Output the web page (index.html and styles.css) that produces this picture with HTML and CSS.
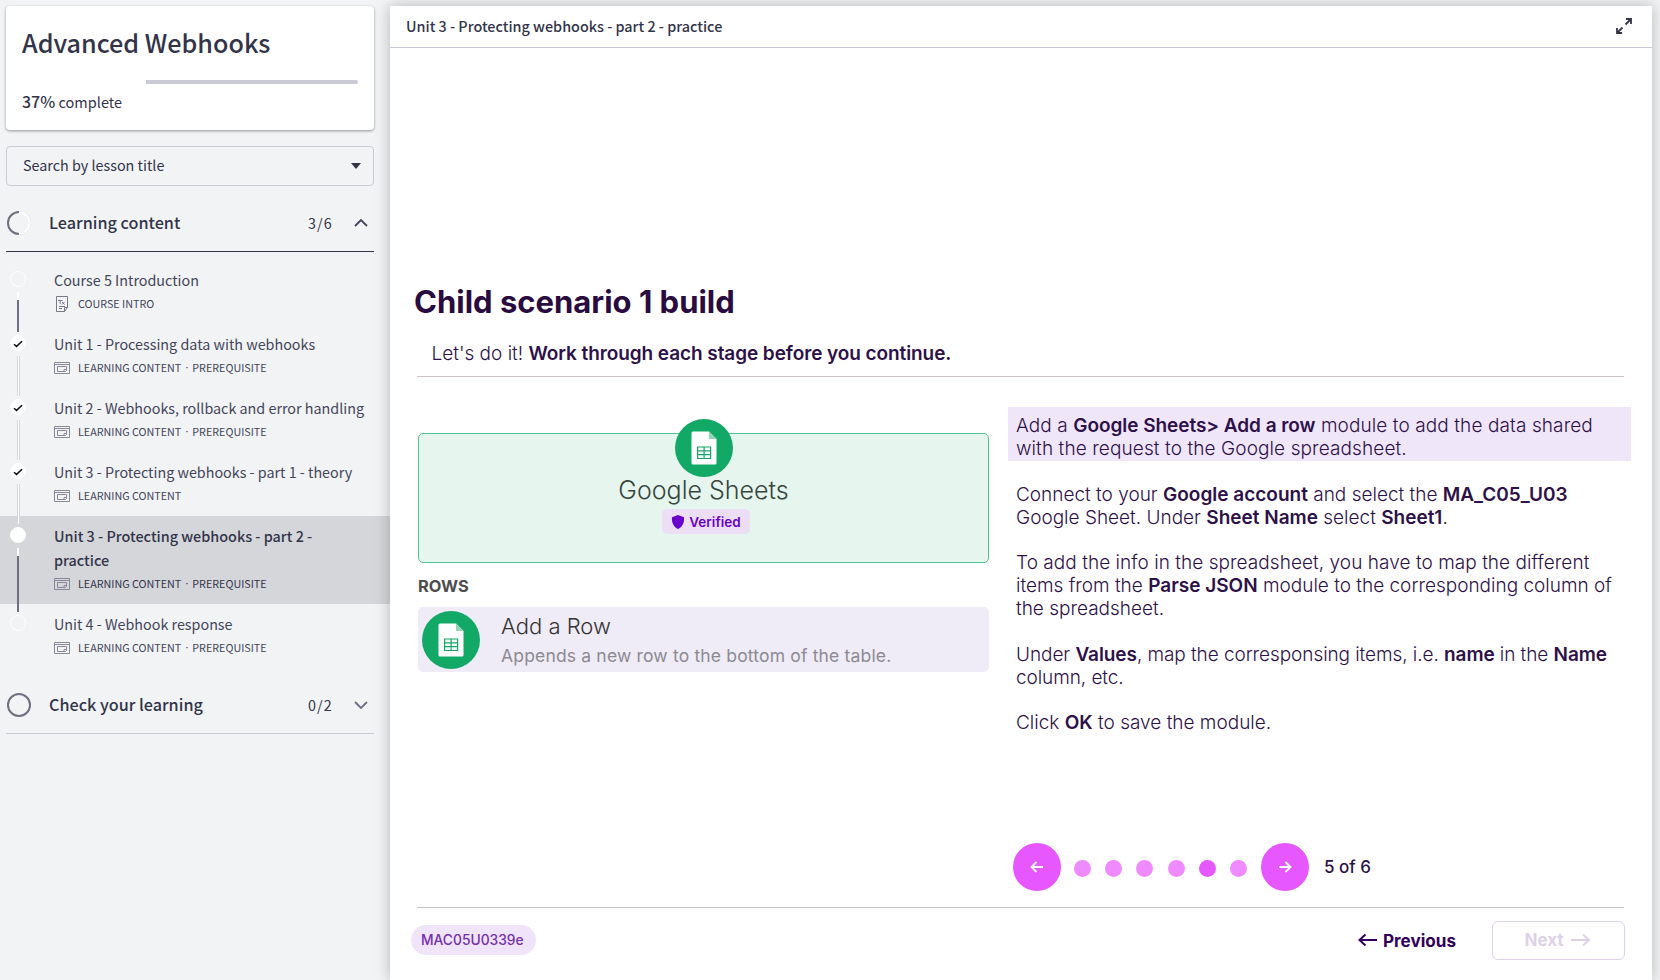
FILE: index.html
```html
<!DOCTYPE html>
<html lang="en">
<head>
<meta charset="utf-8">
<title>Advanced Webhooks</title>
<link rel="stylesheet" href="styles.css">
</head>
<body>
<svg class="defs" width="0" height="0">
  <symbol id="lesson" viewBox="0 0 16 14"><path d="M.5 1.500h15v11H.5zM.5 3.500h15M3.500 5.500h9V9.500l-1 1h-8zM12 8.500h-2v1.500" fill="none" stroke="#87889a"/></symbol>
  <symbol id="check" viewBox="0 0 10 8"><path d="M1 4.200 3.500 6.400 9 1.300" fill="none" stroke="#111" stroke-width="1.500"/></symbol>
  <symbol id="sheet" viewBox="0 0 58 58"><circle cx="29" cy="29" r="29" fill="#12a866"/><path d="M18 12.500h16l7.500 7.500v24a1.500 1.500 0 0 1-1.500 1.500H18a1.500 1.500 0 0 1-1.500-1.500V14a1.500 1.500 0 0 1 1.500-1.500z" fill="#fff"/><path d="M34 12.500l7.500 7.500H34z" fill="#8fd6b5"/><path d="M22.600 28h13v11.500h-13zM22.600 31.800h13M22.600 35.600h13M29.100 28v11.500" fill="none" stroke="#12a866" stroke-width="1.200"/></symbol>
</svg>
<div class="app">
  <aside class="sidebar">
    <section class="course">
      <h1>Advanced Webhooks</h1>
      <div class="progress"><i></i></div>
      <p><b>37%</b> complete</p>
    </section>
    <div class="search"><span>Search by lesson title</span><svg width="10" height="6"><path d="M0 0h10L5 6z" fill="#33344a"/></svg></div>
    <div class="section open">
      <svg width="24" height="24" viewBox="0 0 24 24"><circle cx="12" cy="12" r="11" fill="none" stroke="#d4d5da" stroke-width="2"/><circle cx="12" cy="12" r="10.700" fill="none" stroke="#fff" stroke-width="2"/><path d="M12 1a11 11 0 0 0 0 22" fill="none" stroke="#6e6f83" stroke-width="2"/></svg>
      <h2>Learning content</h2><em>3/6</em>
      <svg width="14" height="8"><path d="M1 7l6-6 6 6" fill="none" stroke="#44455a" stroke-width="1.800"/></svg>
    </div>
    <ul class="lessons">
      <li><div class="track"><span class="dot"></span><span class="rail todo"></span></div><div class="info"><h3>Course 5 Introduction</h3><p><svg width="16" height="16"><path d="M2.500 .5h11v11l-3 4h-8zM10.500 15.500v-4h3M5 10.500h6M5 12.500h3" fill="none" stroke="#77788b"/><path d="M4 4.500h4.500M6.200 4.500V8M8 6l2.500 2.500M10.500 6 8 8.500" fill="none" stroke="#77788b"/></svg><span>COURSE INTRO</span></p></div></li>
      <li><div class="track"><span class="dot full"><svg width="10" height="8"><use href="#check"/></svg></span><span class="rail"></span></div><div class="info"><h3>Unit 1 - Processing data with webhooks</h3><p><svg width="16" height="14"><use href="#lesson"/></svg><span>LEARNING CONTENT</span><i>·</i><span>PREREQUISITE</span></p></div></li>
      <li><div class="track"><span class="dot full"><svg width="10" height="8"><use href="#check"/></svg></span><span class="rail"></span></div><div class="info"><h3>Unit 2 - Webhooks, rollback and error handling</h3><p><svg width="16" height="14"><use href="#lesson"/></svg><span>LEARNING CONTENT</span><i>·</i><span>PREREQUISITE</span></p></div></li>
      <li><div class="track"><span class="dot full"><svg width="10" height="8"><use href="#check"/></svg></span><span class="rail"></span></div><div class="info"><h3>Unit 3 - Protecting webhooks - part 1 - theory</h3><p><svg width="16" height="14"><use href="#lesson"/></svg><span>LEARNING CONTENT</span></p></div></li>
      <li class="active"><div class="track"><span class="dot full"></span><span class="rail todo"></span></div><div class="info"><h3>Unit 3 - Protecting webhooks - part 2 -<br>practice</h3><p><svg width="16" height="14"><use href="#lesson"/></svg><span>LEARNING CONTENT</span><i>·</i><span>PREREQUISITE</span></p></div></li>
      <li><div class="track"><span class="dot"></span></div><div class="info"><h3>Unit 4 - Webhook response</h3><p><svg width="16" height="14"><use href="#lesson"/></svg><span>LEARNING CONTENT</span><i>·</i><span>PREREQUISITE</span></p></div></li>
    </ul>
    <div class="section">
      <svg width="24" height="24" viewBox="0 0 24 24"><circle cx="12" cy="12" r="11" fill="none" stroke="#6e6f83" stroke-width="2"/></svg>
      <h2>Check your learning</h2><em>0/2</em>
      <svg width="14" height="8"><path d="M1 1l6 6 6-6" fill="none" stroke="#6e6f83" stroke-width="1.800"/></svg>
    </div>
  </aside>
  <main class="player">
    <header><h2>Unit 3 - Protecting webhooks - part 2 - practice</h2>
      <svg width="16" height="16"><path d="M9.500 6.500 14.500 1.500M10 1h5v5M6.500 9.500l-5 5M1 10v5h5" fill="none" stroke="#33344a" stroke-width="1.800"/></svg></header>
    <div class="slide">
      <h1>Child scenario 1 build</h1>
      <p class="lead">Let's do it! <b>Work through each stage before you continue.</b></p>
      <div class="columns">
        <div class="left">
          <div class="app-card">
            <svg width="58" height="58"><use href="#sheet"/></svg>
            <h2>Google Sheets</h2>
            <div class="verified"><svg width="14" height="14" viewBox="0 0 14 14"><path d="M7 0 13 2.200C13.600 8 11 12 7 14 3 12 .4 8 1 2.200z" fill="#6a00cc"/></svg><span>Verified</span></div>
          </div>
          <h4>ROWS</h4>
          <div class="row-card"><svg width="58" height="58"><use href="#sheet"/></svg><div><h3>Add a Row</h3><p>Appends a new row to the bottom of the table.</p></div></div>
        </div>
        <div class="steps">
          <p class="hl">Add a <b>Google Sheets&gt; Add a row</b> module to add the data shared<br>with the request to the Google spreadsheet.</p>
          <p>Connect to your <b>Google account</b> and select the <b>MA_C05_U03</b><br>Google Sheet. Under <b>Sheet Name</b> select <b>Sheet1</b>.</p>
          <p class="map"><span>To add the info in the spreadsheet, you have to map the different</span><br>items from the <b>Parse JSON</b> module to the corresponding column of<br>the spreadsheet.</p>
          <p class="values">Under <b>Values</b>, map the corresponsing items, i.e. <b>name</b> in the <b>Name</b><br>column, etc.</p>
          <p>Click <b>OK</b> to save the module.</p>
          <nav class="pager">
            <button><svg width="14" height="12"><path d="M13 6H1.500M6.500 1l-5 5 5 5" fill="none" stroke="#fff" stroke-width="1.800"/></svg></button>
            <div class="dots"><i></i><i></i><i></i><i></i><i class="on"></i><i></i></div>
            <button><svg width="14" height="12"><path d="M1 6h11.500M7.500 1l5 5-5 5" fill="none" stroke="#fff" stroke-width="1.800"/></svg></button>
            <span class="count">5 of 6</span>
          </nav>
        </div>
      </div>
      <footer>
        <span class="code">MAC05U0339e</span>
        <a class="prev"><svg width="20" height="14"><path d="M19 7H1.500M7.500 1.500 1.500 7l6 5.500" fill="none" stroke="#32005c" stroke-width="2"/></svg><span>Previous</span></a>
        <a class="next"><span>Next</span><svg width="20" height="14"><path d="M0 7h18M12 1.500 18 7l-6 5.500" fill="none" stroke="#ddd2e8" stroke-width="2"/></svg></a>
      </footer>
    </div>
  </main>
</div>
</body>
</html>
```
FILE: styles.css
```css
* { box-sizing: border-box; margin: 0; padding: 0; }
body { width: 1660px; height: 980px; overflow: hidden; background: #f1f3f5; color: #33344a; font-family: "Noto Sans CJK SC", "Open Sans", sans-serif; }
.defs { position: absolute; }
svg { display: block; flex: none; }
i, em { font-style: normal; }
.app { display: flex; height: 980px; }
.sidebar { width: 390px; padding-top: 6px; flex: none; }
.course { width: 368px; height: 124px; margin-left: 6px; padding: 15px 16px; background: #fff; border-radius: 4px; box-shadow: 0 1px 3px rgba(0,0,0,.4); }
.course h1 { font-size: 25.150px; line-height: 42px; font-weight: 500; white-space: nowrap; }
.progress { height: 4px; margin-top: 17px; background: #c9cbd6; border-radius: 2px; }
.progress i { display: block; width: 37%; height: 4px; background: #fff; }
.course p { margin-top: 5px; font-size: 14.500px; line-height: 24px; }
.course b { font-size: 16px; font-weight: 500; }
.search { display: flex; justify-content: space-between; align-items: center; width: 368px; height: 40px; margin: 16px 0 0 6px; padding: 0 12px 0 16px; border: 1px solid #c9cbd6; border-radius: 4px; font-size: 14.350px; }
.search span { padding-bottom: 3px; }
.section { display: flex; align-items: center; width: 368px; height: 58px; margin-left: 6px; padding: 0 6px 0 1px; border-bottom: 1px solid #c9cbd6; }
.section.open { height: 66px; padding-top: 8px; border-color: #33344a; }
.section h2 { flex: 1; margin-left: 18px; padding-bottom: 2px; font-size: 16.200px; font-weight: 500; }
.section em { margin-right: 21px; font-size: 14.300px; letter-spacing: 1.200px; }
.lessons { list-style: none; padding-top: 8px; margin-bottom: 8px; }
.lessons li { display: flex; min-height: 64px; padding: 8px 0 9px; color: #44455a; }
.lessons .active { min-height: 88px; background: #d5d6da; color: #33344a; }
.track { position: relative; width: 54px; padding: 3px 0 0 10px; }
.dot { display: flex; align-items: center; justify-content: center; width: 16px; height: 16px; border: 1px solid #fff; border-radius: 50%; }
.dot.full { background: #fff; }
.dot svg { margin-top: 1px; }
.rail { position: absolute; z-index: 1; left: 17px; top: 24px; bottom: -17px; width: 3px; background: #fff; border: solid #d5d6da; border-width: 0 1px; }
.rail.todo { width: 2px; border: 0; background: linear-gradient(#fff 8px, #6e6f83 8px); }
.info h3 { font-size: 14.330px; line-height: 24px; font-weight: 400; white-space: nowrap; }
.active .info h3 { font-size: 14.400px; font-weight: 500; }
.info p { display: flex; align-items: center; height: 22px; font-size: 10.750px; }
.info p svg { margin: 2px 8px 0 0; }
.info p i { width: 11px; text-align: center; font-family: "Open Sans", sans-serif; }
.player { width: 1262px; margin-top: 6px; background: #fff; box-shadow: 0 0 14px rgba(0,0,0,.25); }
header { display: flex; align-items: center; justify-content: space-between; height: 42px; padding: 0 20px 0 16px; border-bottom: 1px solid #c9c8d8; }
header h2 { padding-bottom: 2px; font-size: 14.380px; font-weight: 500; }
header svg { margin-top: -2px; }
.slide { padding: 234px 28px 0 27px; font-family: Inter, sans-serif; color: #2d1148; }
.slide h1 { margin-left: -3px; font-size: 31px; line-height: 40px; font-weight: 700; color: #290b40; }
.lead { height: 55px; padding: 22px 0 0 14.500px; border-bottom: 1px solid #cbc1c7; font-size: 19px; line-height: 20px; font-weight: 300; white-space: nowrap; }
b { font-weight: 600; }
.lead b { letter-spacing: -.08px; }
.columns { display: flex; height: 530px; }
.left { width: 572px; padding: 56px 0 0 1px; flex: none; }
.app-card { display: flex; flex-direction: column; align-items: center; height: 130px; border: 1px solid #4fc391; border-radius: 5px; background: #e6f5ed; }
.app-card > svg { margin-top: -15px; }
.app-card h2 { margin-top: -2px; font-size: 25px; line-height: 30px; font-weight: 350; color: #36463f; }
.verified { display: flex; align-items: center; gap: 4px; height: 25px; margin: 4px 0 0 5px; padding: 0 9px; border-radius: 5px; background: #ecdff5; color: #6a00cc; font-size: 13.500px; font-weight: 600; }
.left h4 { margin: 13px 0 11px; font-size: 16.400px; line-height: 20px; color: #4d4d4d; }
.row-card { display: flex; align-items: center; height: 65px; padding-left: 4px; border-radius: 5px; background: #efebf7; }
.row-card div { margin: 2px 0 0 21px; }
.row-card h3 { font-size: 22px; line-height: 30px; font-weight: 350; color: #333; }
.row-card p { font-size: 17.500px; line-height: 30px; font-weight: 400; letter-spacing: .17px; color: #8c8a91; white-space: nowrap; }
.steps { width: 623px; margin: 30px 0 0 19px; flex: none; font-size: 19px; line-height: 22.880px; font-weight: 300; white-space: nowrap; }
.steps p { padding-left: 8px; margin-bottom: 22.880px; }
.steps .hl { height: 54px; padding-top: 8px; margin-bottom: 22.700px; background: #f0e6fa; letter-spacing: .1px; }
.hl b { letter-spacing: -.05px; }
.map span { letter-spacing: .05px; }
.values { letter-spacing: -.07px; }
.pager { display: flex; align-items: center; margin: 108px 0 0 5px; }
button { display: flex; align-items: center; justify-content: center; width: 48px; height: 48px; border: 0; border-radius: 50%; background: #e657ff; }
.dots { display: flex; gap: 14.200px; margin: 2px 14px 0 13px; }
.dots i { width: 17px; height: 17px; border-radius: 50%; background: #ef8aff; }
.dots .on { background: #e657ff; }
.count { margin-left: 15px; font-size: 17px; font-weight: 500; }
footer { display: flex; align-items: center; height: 65px; border-top: 1px solid #cbc1c7; }
.code { height: 30px; margin-left: -6px; padding: 0 12px 0 10px; border-radius: 15px; background: #f0e4fb; color: #752fa8; font-size: 13.800px; line-height: 30px; font-weight: 500; }
.prev { display: flex; align-items: center; gap: 5px; margin: 0 36px 0 auto; color: #32005c; font-size: 17.100px; font-weight: 700; }
.next { display: flex; align-items: center; justify-content: center; gap: 7px; width: 133px; height: 39px; margin-right: -1px; padding-right: 2px; border: 1px solid #ddd2e8; border-radius: 6px; color: #ddd2e8; font-size: 17px; font-weight: 700; }
```
